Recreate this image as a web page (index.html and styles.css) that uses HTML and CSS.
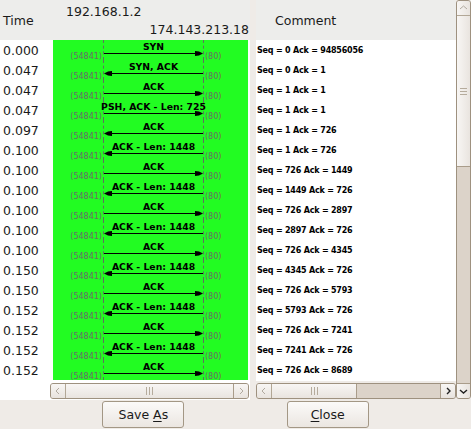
FILE: index.html
```html
<!DOCTYPE html>
<html>
<head>
<meta charset="utf-8">
<link rel="stylesheet" href="styles.css">
</head>
<body>
<div class="window">
  <div class="panes">
    <div class="left">
      <div class="lhead">
        <div class="timehead">Time</div>
        <div class="hosts">
          <div class="host1">192.168.1.2</div>
          <div class="host2">174.143.213.18</div>
        </div>
      </div>
      <div class="lbody">
        <div class="times">
          <div class="t">0.000</div><div class="t">0.047</div><div class="t">0.047</div><div class="t">0.047</div>
          <div class="t">0.097</div><div class="t">0.100</div><div class="t">0.100</div><div class="t">0.100</div>
          <div class="t">0.100</div><div class="t">0.100</div><div class="t">0.100</div><div class="t">0.150</div>
          <div class="t">0.150</div><div class="t">0.152</div><div class="t">0.152</div><div class="t">0.152</div>
          <div class="t">0.152</div>
        </div>
        <div class="graphwrap">
          <div class="graph">
            <div class="grow"><span class="port pl">(54841)</span><div class="mid"><span class="lbl">SYN</span><svg class="arrow" width="99" height="5"><line x1="0" y1="2.5" x2="98" y2="2.5"/><polygon points="91,0 95,0.6 99,2.5 95,4.4 91,5"/></svg></div><span class="port pr">(80)</span></div>
            <div class="grow"><span class="port pl">(54841)</span><div class="mid"><span class="lbl">SYN, ACK</span><svg class="arrow" width="99" height="5"><line x1="1" y1="2.5" x2="99" y2="2.5"/><polygon points="8,0 4,0.6 0,2.5 4,4.4 8,5"/></svg></div><span class="port pr">(80)</span></div>
            <div class="grow"><span class="port pl">(54841)</span><div class="mid"><span class="lbl">ACK</span><svg class="arrow" width="99" height="5"><line x1="0" y1="2.5" x2="98" y2="2.5"/><polygon points="91,0 95,0.6 99,2.5 95,4.4 91,5"/></svg></div><span class="port pr">(80)</span></div>
            <div class="grow"><span class="port pl">(54841)</span><div class="mid"><span class="lbl">PSH, ACK - Len: 725</span><svg class="arrow" width="99" height="5"><line x1="0" y1="2.5" x2="98" y2="2.5"/><polygon points="91,0 95,0.6 99,2.5 95,4.4 91,5"/></svg></div><span class="port pr">(80)</span></div>
            <div class="grow"><span class="port pl">(54841)</span><div class="mid"><span class="lbl">ACK</span><svg class="arrow" width="99" height="5"><line x1="1" y1="2.5" x2="99" y2="2.5"/><polygon points="8,0 4,0.6 0,2.5 4,4.4 8,5"/></svg></div><span class="port pr">(80)</span></div>
            <div class="grow"><span class="port pl">(54841)</span><div class="mid"><span class="lbl">ACK - Len: 1448</span><svg class="arrow" width="99" height="5"><line x1="1" y1="2.5" x2="99" y2="2.5"/><polygon points="8,0 4,0.6 0,2.5 4,4.4 8,5"/></svg></div><span class="port pr">(80)</span></div>
            <div class="grow"><span class="port pl">(54841)</span><div class="mid"><span class="lbl">ACK</span><svg class="arrow" width="99" height="5"><line x1="0" y1="2.5" x2="98" y2="2.5"/><polygon points="91,0 95,0.6 99,2.5 95,4.4 91,5"/></svg></div><span class="port pr">(80)</span></div>
            <div class="grow"><span class="port pl">(54841)</span><div class="mid"><span class="lbl">ACK - Len: 1448</span><svg class="arrow" width="99" height="5"><line x1="1" y1="2.5" x2="99" y2="2.5"/><polygon points="8,0 4,0.6 0,2.5 4,4.4 8,5"/></svg></div><span class="port pr">(80)</span></div>
            <div class="grow"><span class="port pl">(54841)</span><div class="mid"><span class="lbl">ACK</span><svg class="arrow" width="99" height="5"><line x1="0" y1="2.5" x2="98" y2="2.5"/><polygon points="91,0 95,0.6 99,2.5 95,4.4 91,5"/></svg></div><span class="port pr">(80)</span></div>
            <div class="grow"><span class="port pl">(54841)</span><div class="mid"><span class="lbl">ACK - Len: 1448</span><svg class="arrow" width="99" height="5"><line x1="1" y1="2.5" x2="99" y2="2.5"/><polygon points="8,0 4,0.6 0,2.5 4,4.4 8,5"/></svg></div><span class="port pr">(80)</span></div>
            <div class="grow"><span class="port pl">(54841)</span><div class="mid"><span class="lbl">ACK</span><svg class="arrow" width="99" height="5"><line x1="0" y1="2.5" x2="98" y2="2.5"/><polygon points="91,0 95,0.6 99,2.5 95,4.4 91,5"/></svg></div><span class="port pr">(80)</span></div>
            <div class="grow"><span class="port pl">(54841)</span><div class="mid"><span class="lbl">ACK - Len: 1448</span><svg class="arrow" width="99" height="5"><line x1="1" y1="2.5" x2="99" y2="2.5"/><polygon points="8,0 4,0.6 0,2.5 4,4.4 8,5"/></svg></div><span class="port pr">(80)</span></div>
            <div class="grow"><span class="port pl">(54841)</span><div class="mid"><span class="lbl">ACK</span><svg class="arrow" width="99" height="5"><line x1="0" y1="2.5" x2="98" y2="2.5"/><polygon points="91,0 95,0.6 99,2.5 95,4.4 91,5"/></svg></div><span class="port pr">(80)</span></div>
            <div class="grow"><span class="port pl">(54841)</span><div class="mid"><span class="lbl">ACK - Len: 1448</span><svg class="arrow" width="99" height="5"><line x1="1" y1="2.5" x2="99" y2="2.5"/><polygon points="8,0 4,0.6 0,2.5 4,4.4 8,5"/></svg></div><span class="port pr">(80)</span></div>
            <div class="grow"><span class="port pl">(54841)</span><div class="mid"><span class="lbl">ACK</span><svg class="arrow" width="99" height="5"><line x1="0" y1="2.5" x2="98" y2="2.5"/><polygon points="91,0 95,0.6 99,2.5 95,4.4 91,5"/></svg></div><span class="port pr">(80)</span></div>
            <div class="grow"><span class="port pl">(54841)</span><div class="mid"><span class="lbl">ACK - Len: 1448</span><svg class="arrow" width="99" height="5"><line x1="1" y1="2.5" x2="99" y2="2.5"/><polygon points="8,0 4,0.6 0,2.5 4,4.4 8,5"/></svg></div><span class="port pr">(80)</span></div>
            <div class="grow"><span class="port pl">(54841)</span><div class="mid"><span class="lbl">ACK</span><svg class="arrow" width="99" height="5"><line x1="0" y1="2.5" x2="98" y2="2.5"/><polygon points="91,0 95,0.6 99,2.5 95,4.4 91,5"/></svg></div><span class="port pr">(80)</span></div>
          </div>
          <div class="hscroll">
            <div class="step"><svg width="14" height="14"><polyline class="chev off" points="8,4 5,7 8,10"/></svg></div>
            <div class="thumb grow1"><span class="grip-v"></span><span class="grip-v"></span><span class="grip-v"></span></div>
            <div class="step"><svg width="14" height="14"><polyline class="chev off" points="6,4 9,7 6,10"/></svg></div>
          </div>
        </div>
      </div>
    </div>
    <div class="handle"></div>
    <div class="right">
      <div class="rhead">Comment</div>
      <div class="comments">
        <div class="c">Seq = 0 Ack = 94856056</div>
        <div class="c">Seq = 0 Ack = 1</div>
        <div class="c">Seq = 1 Ack = 1</div>
        <div class="c">Seq = 1 Ack = 1</div>
        <div class="c">Seq = 1 Ack = 726</div>
        <div class="c">Seq = 1 Ack = 726</div>
        <div class="c">Seq = 726 Ack = 1449</div>
        <div class="c">Seq = 1449 Ack = 726</div>
        <div class="c">Seq = 726 Ack = 2897</div>
        <div class="c">Seq = 2897 Ack = 726</div>
        <div class="c">Seq = 726 Ack = 4345</div>
        <div class="c">Seq = 4345 Ack = 726</div>
        <div class="c">Seq = 726 Ack = 5793</div>
        <div class="c">Seq = 5793 Ack = 726</div>
        <div class="c">Seq = 726 Ack = 7241</div>
        <div class="c">Seq = 7241 Ack = 726</div>
        <div class="c">Seq = 726 Ack = 8689</div>
      </div>
      <div class="hscroll rs">
        <div class="step"><svg width="14" height="14"><polyline class="chev off" points="8,4 5,7 8,10"/></svg></div>
        <div class="thumb rthumb"><span class="grip-v"></span><span class="grip-v"></span><span class="grip-v"></span></div>
        <div class="trough"></div>
        <div class="step on"><svg width="14" height="14"><polyline class="chev" points="6,4 9,7 6,10"/></svg></div>
      </div>
    </div>
    <div class="vscroll">
      <div class="vstep"><svg width="13" height="14"><polyline class="chev off" points="3,8 6.5,5 10,8"/></svg></div>
      <div class="vthumb"><span class="grip-h"></span><span class="grip-h"></span><span class="grip-h"></span></div>
      <div class="trough"></div>
      <div class="vstep on"><svg width="13" height="14"><polyline class="chev" points="3,6 6.5,9 10,6"/></svg></div>
    </div>
  </div>
  <div class="buttons">
    <button class="btn">Save <u>A</u>s</button>
    <button class="btn"><u>C</u>lose</button>
  </div>
</div>
</body>
</html>
```

FILE: styles.css
```css
html, body {
  margin: 0;
  padding: 0;
}
body {
  background: #efebe7;
  font-family: "DejaVu Sans", sans-serif;
  font-size: 12.5px;
  color: #1a1a1a;
}
.window {
  width: 471px;
  height: 429px;
  overflow: hidden;
}
.panes {
  display: flex;
  height: 400px;
}
.left {
  width: 250px;
  display: flex;
  flex-direction: column;
}
.lhead {
  height: 40px;
  background: #ededeb;
  display: flex;
}
.timehead {
  width: 47px;
  padding: 13px 0 0 3px;
  line-height: 15px;
}
.hosts {
  width: 200px;
  padding-top: 3px;
  line-height: 18px;
  white-space: nowrap;
}
.host1 {
  padding-left: 16px;
}
.host2 {
  text-align: right;
  padding-right: 1px;
}
.lbody {
  flex: 1;
  background: #ffffff;
  display: flex;
}
.times {
  width: 47px;
  padding-left: 3px;
}
.t {
  height: 20px;
  box-sizing: border-box;
  padding-top: 1px;
  line-height: 20px;
}
.graphwrap {
  width: 200px;
  display: flex;
  flex-direction: column;
}
.graph {
  margin-left: 3px;
  width: 195px;
  height: 340px;
  background: #22fc22;
}
.grow {
  display: flex;
  height: 20px;
}
.port {
  font-size: 8px;
  line-height: 9px;
  color: #6a6a6a;
  padding-top: 12px;
  white-space: nowrap;
}
.pl {
  width: 49px;
  padding-right: 1px;
  text-align: right;
}
.pr {
  padding-left: 1px;
}
.mid {
  width: 99px;
  border-left: 1px dashed #5f6f5f;
  border-right: 1px dashed #5f6f5f;
  display: flex;
  flex-direction: column;
  align-items: center;
}
.lbl {
  font-weight: bold;
  font-size: 9.3px;
  line-height: 10px;
  padding-top: 2px;
  white-space: nowrap;
  color: #000;
}
.arrow {
  display: block;
  margin-top: -1px;
}
.arrow line {
  stroke: #000;
  stroke-width: 1;
}
.arrow polygon {
  fill: #000;
}
.hscroll {
  display: flex;
  width: 197px;
  height: 14px;
  margin-top: 3px;
  border: 1px solid #9e917f;
  border-radius: 3px;
  background: #dcd3c9;
  overflow: hidden;
}
.step {
  width: 14px;
  background: linear-gradient(#f8f6f4, #e8e3de);
  display: flex;
  align-items: center;
  justify-content: center;
}
.step.on {
  border-left: 1px solid #a99c8a;
}
.thumb {
  background: linear-gradient(#f8f6f4, #e9e4df);
  border-left: 1px solid #b2a796;
  border-right: 1px solid #a99c8a;
  display: flex;
  align-items: center;
  justify-content: center;
  gap: 2px;
}
.grow1 {
  flex: 1;
}
.rthumb {
  width: 84px;
}
.trough {
  flex: 1;
}
.grip-v {
  width: 1px;
  height: 8px;
  background: #b5ab9c;
}
.chev {
  fill: none;
  stroke: #222;
  stroke-width: 1.4;
}
.chev.off {
  stroke: #b0a99f;
  stroke-width: 1;
}
.handle {
  width: 6px;
  background: #efebe7;
}
.right {
  width: 200px;
  display: flex;
  flex-direction: column;
}
.rhead {
  height: 40px;
  box-sizing: border-box;
  background: #ededeb;
  padding: 13px 0 0 19px;
  line-height: 15px;
}
.comments {
  height: 341px;
  background: #ffffff;
}
.c {
  height: 20px;
  box-sizing: border-box;
  padding: 1px 0 0 1px;
  line-height: 20px;
  font-size: 8px;
  font-weight: bold;
  letter-spacing: -0.2px;
  color: #000;
  white-space: nowrap;
}
.hscroll.rs {
  width: 198px;
  margin-top: 2px;
}
.vscroll {
  width: 13px;
  height: 397px;
  border: 1px solid #9e917f;
  border-radius: 3px;
  background: #dcd3c9;
  display: flex;
  flex-direction: column;
  overflow: hidden;
}
.vstep {
  height: 14px;
  background: linear-gradient(90deg, #f8f6f4, #e8e3de);
  display: flex;
  align-items: center;
  justify-content: center;
}
.vstep.on {
  border-top: 1px solid #a99c8a;
}
.vthumb {
  height: 150px;
  border-top: 1px solid #b2a796;
  border-bottom: 1px solid #a99c8a;
  background: linear-gradient(90deg, #f8f6f4, #e9e4df);
  display: flex;
  flex-direction: column;
  align-items: center;
  justify-content: center;
  gap: 2px;
}
.grip-h {
  width: 7px;
  height: 1px;
  background: #b5ab9c;
}
.buttons {
  height: 29px;
  display: flex;
  justify-content: space-evenly;
  align-items: flex-start;
}
.btn {
  margin-top: 1px;
  width: 82px;
  height: 27px;
  border: 1px solid #a39785;
  border-radius: 3px;
  background: linear-gradient(#fbfaf9, #ebe6e1);
  font-family: "DejaVu Sans", sans-serif;
  font-size: 12.5px;
  color: #1a1a1a;
  padding: 0;
}
.btn u {
  text-decoration-thickness: 1px;
  text-underline-offset: 2px;
}
```
